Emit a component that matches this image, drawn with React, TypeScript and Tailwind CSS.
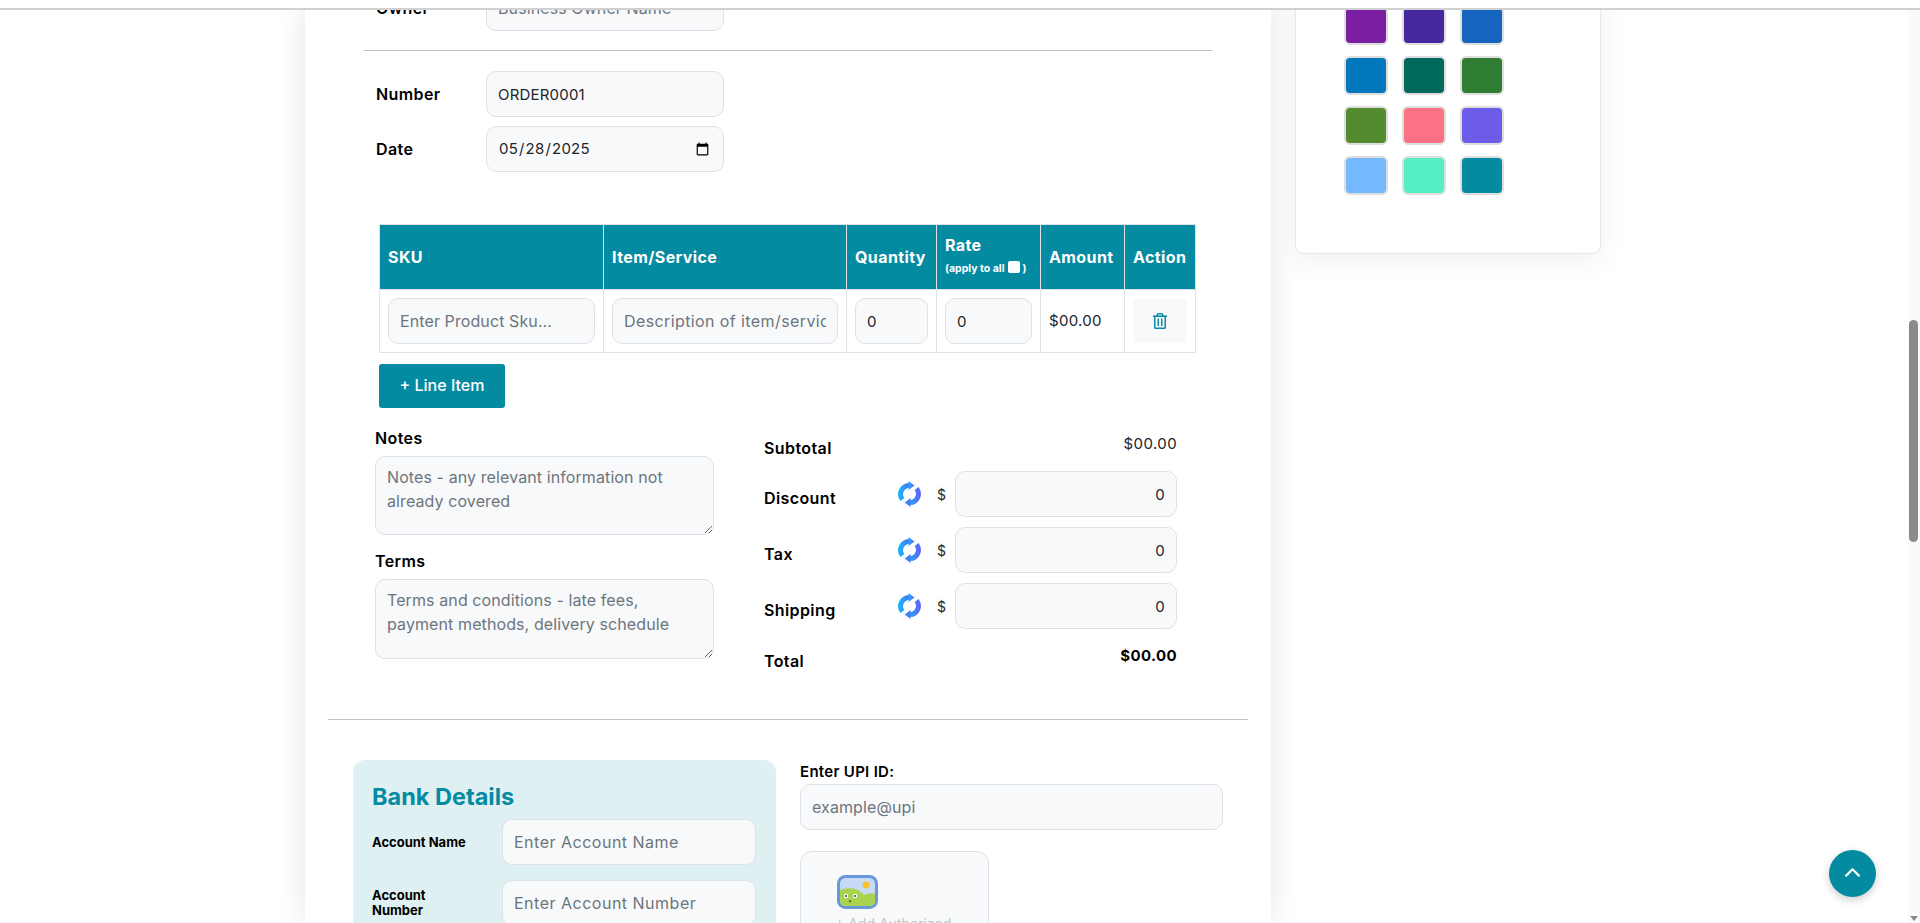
import { FaRegTrashAlt } from "react-icons/fa";
import { FaChevronUp } from "react-icons/fa6";

const inputClass =
  "h-[46px] rounded-[10px] border border-[#dee2e6] bg-[#f8f9fa] px-[11px] text-[15px] tracking-[0.2px] text-[#212529] outline-none placeholder:text-[16px] placeholder:text-[#6c757d] placeholder:tracking-[0.1px]";
const labelClass = "text-[16px] font-semibold tracking-[0.4px] text-black";

const swatches = [
  "bg-[#7b1fa2]",
  "bg-[#4527a0]",
  "bg-[#1565c0]",
  "bg-[#0277bd]",
  "bg-[#00695c]",
  "bg-[#2e7d32]",
  "bg-[#558b2f]",
  "bg-[#fb7285]",
  "bg-[#6c5ce7]",
  "bg-[#74b9ff]",
  "bg-[#55efc4]",
  "bg-[#058ba1]",
];

function SwapIcon() {
  return (
    <svg width="25" height="26" viewBox="0 0 25 26" fill="none" className="shrink-0">
      <defs>
        <linearGradient id="swap" x1="0" y1="0" x2="1" y2="0">
          <stop offset="0" stopColor="#1cb0f6" />
          <stop offset="1" stopColor="#5a67f8" />
        </linearGradient>
      </defs>
      <path d="M5.4 18.4A8.7 8.7 0 0 1 12 4.4" stroke="url(#swap)" strokeWidth="5" />
      <path d="M19.6 7.6A8.7 8.7 0 0 1 13 21.6" stroke="url(#swap)" strokeWidth="5" />
      <path d="M11.5 0 17.5 4.4 11.5 9Z" fill="url(#swap)" />
      <path d="M13.5 17 7.5 21.6 13.5 26Z" fill="url(#swap)" />
    </svg>
  );
}

function PictureIcon() {
  return (
    <svg width="41" height="34" viewBox="0 0 41 34">
      <rect x="1.5" y="1.5" width="38" height="31" rx="7" fill="#c6daf6" stroke="#6a97d9" strokeWidth="3" />
      <path d="M3 23V15C10 12 21 12 27 20C31 18 35 18 38 19V26C38 29 36 31 33 31H8C5 31 3 29 3 23Z" fill="#a8d34f" />
      <circle cx="29" cy="10" r="3.4" fill="#fbc02d" />
      <circle cx="9" cy="21" r="2.2" fill="#fff" />
      <circle cx="18" cy="21" r="2.2" fill="#fff" />
      <circle cx="9" cy="21" r="1" fill="#333" />
      <circle cx="18" cy="21" r="1" fill="#333" />
      <path d="M11.5 25.5h3l-1.5 2Z" fill="#4a3a2a" />
    </svg>
  );
}

function ChargeRow({ label }: { label: string }) {
  return (
    <div className="flex items-center">
      <span className={`mt-[8px] w-[133px] ${labelClass}`}>{label}</span>
      <SwapIcon />
      <span className="ml-[15px] w-[18px] text-[14px] text-[#212529]">$</span>
      <input className={`${inputClass} w-[222px] text-right`} defaultValue="0" />
    </div>
  );
}

export default function App() {
  return (
    <div className="relative h-[923px] w-[1920px] overflow-hidden bg-white font-['Inter','Liberation_Sans',sans-serif]">
      {/* sticky header edge */}
      <div className="absolute inset-x-0 top-0 z-10 h-[10px] border-b-2 border-[#d0d0d0] bg-white" />

      <div className="flex h-full">
        <div className="flex flex-1 items-start gap-[24px] pl-[305px]">
          {/* main form card */}
          <div className="h-full w-[966px] bg-white shadow-[0_0_30px_rgba(0,0,0,0.1)]">
            <div className="mx-[59px] border-b border-[#c0c0c0] pb-[19px]">
              <div className="-mt-[15px] flex items-center pl-[12px]">
                <label className={`w-[110px] ${labelClass}`}>Owner</label>
                <input className={`${inputClass} w-[238px]`} placeholder="Business Owner Name" />
              </div>
            </div>

            <div className="mx-[59px] mt-[20px] flex flex-col gap-[9px] pl-[12px]">
              <div className="flex items-center">
                <label className={`w-[110px] ${labelClass}`}>Number</label>
                <input className={`${inputClass} w-[238px]`} defaultValue="ORDER0001" />
              </div>
              <div className="flex items-center">
                <label className={`w-[110px] ${labelClass}`}>Date</label>
                <input type="date" className={`${inputClass} w-[238px]`} defaultValue="2025-05-28" />
              </div>
            </div>

            {/* line items */}
            <div className="ml-[74px] mt-[52px] w-[816px]">
              <table className="w-full table-fixed border-collapse">
                <colgroup>
                  <col className="w-[224px]" />
                  <col className="w-[243px]" />
                  <col className="w-[90px]" />
                  <col className="w-[104px]" />
                  <col className="w-[84px]" />
                  <col className="w-[71px]" />
                </colgroup>
                <thead>
                  <tr className="h-[65px] bg-[#058ba1] text-left text-[16px] font-bold tracking-[0.4px] text-white">
                    <th className="border border-[#dee2e6] px-[8px]">SKU</th>
                    <th className="border border-[#dee2e6] px-[8px]">Item/Service</th>
                    <th className="border border-[#dee2e6] px-[8px]">Quantity</th>
                    <th className="border border-[#dee2e6] px-[8px] leading-[24px]">
                      <div className="-mt-[1px]">Rate</div>
                      <div className="flex items-center gap-[3px] whitespace-nowrap text-[10.5px] leading-[24px] tracking-normal">
                        (apply to all
                        <input type="checkbox" className="-mt-[3px] size-[12px] appearance-none rounded-[2px] bg-white" />
                        <span>)</span>
                      </div>
                    </th>
                    <th className="border border-[#dee2e6] px-[8px]">Amount</th>
                    <th className="border border-[#dee2e6] px-[8px]">Action</th>
                  </tr>
                </thead>
                <tbody>
                  <tr className="h-[63px] text-[15px] text-[#212529]">
                    <td className="border border-[#dee2e6] px-[8px]">
                      <input className={`${inputClass} w-full`} placeholder="Enter Product Sku..." />
                    </td>
                    <td className="border border-[#dee2e6] px-[8px]">
                      <input className={`${inputClass} w-full placeholder:tracking-[0.4px]`} placeholder="Description of item/service" />
                    </td>
                    <td className="border border-[#dee2e6] px-[8px]">
                      <input className={`${inputClass} w-full`} defaultValue="0" />
                    </td>
                    <td className="border border-[#dee2e6] px-[8px]">
                      <input className={`${inputClass} w-full`} defaultValue="0" />
                    </td>
                    <td className="border border-[#dee2e6] px-[8px] tracking-[0.3px]">$00.00</td>
                    <td className="border border-[#dee2e6] px-[8px]">
                      <button className="flex h-[44px] w-[54px] items-center justify-center rounded-[4px] bg-[#f8f9fa] text-[#058ba1]">
                        <FaRegTrashAlt className="size-[16px]" />
                      </button>
                    </td>
                  </tr>
                </tbody>
              </table>
              <button className="mt-[11px] h-[44px] w-[126px] rounded-[3px] bg-[#058ba1] pb-[2px] text-[16px] font-medium text-white">
                + Line Item
              </button>
            </div>

            {/* notes and totals */}
            <div className="ml-[70px] mt-[19px] flex items-start">
              <div className="w-[339px]">
                <label className={`block leading-[22px] ${labelClass}`}>Notes</label>
                <textarea
                  className={`${inputClass} mt-[7px] block h-[79px] w-full py-[8px] leading-[24px]`}
                  placeholder="Notes - any relevant information not already covered"
                />
                <label className={`mt-[15px] block leading-[22px] ${labelClass}`}>Terms</label>
                <textarea
                  className={`${inputClass} mt-[7px] block h-[80px] w-full py-[8px] leading-[24px]`}
                  placeholder="Terms and conditions - late fees, payment methods, delivery schedule"
                />
              </div>

              <div className="ml-[50px] mt-[6px] w-[413px]">
                <div className="flex h-[38px] items-start justify-between">
                  <span className={`mt-[3px] ${labelClass}`}>Subtotal</span>
                  <span className="text-[15px] tracking-[0.4px] text-[#212529]">$00.00</span>
                </div>
                <div className="flex flex-col gap-[10px]">
                  <ChargeRow label="Discount" />
                  <ChargeRow label="Tax" />
                  <ChargeRow label="Shipping" />
                </div>
                <div className="mt-[16px] flex items-start justify-between">
                  <span className={`mt-[4px] ${labelClass}`}>Total</span>
                  <span className="text-[15px] font-bold tracking-[0.4px] text-black">$00.00</span>
                </div>
              </div>
            </div>

            <div className="mx-[23px] mt-[46px] border-t border-[#c0c0c0]" />

            {/* bank details and signature */}
            <div className="ml-[48px] mt-[40px] flex items-start gap-[24px]">
              <div className="h-[300px] w-[423px] rounded-[12px] bg-[#dff0f3] px-[19px] pt-[24px]">
                <h2 className="text-[23.5px] font-bold leading-[26px] text-[#058ba1]">Bank Details</h2>
                <div className="mt-[9px] flex items-center">
                  <label className="w-[130px] text-[13px] font-bold leading-[15px] text-black">Account Name</label>
                  <input className={`${inputClass} w-[254px] placeholder:tracking-[0.5px]`} placeholder="Enter Account Name" />
                </div>
                <div className="mt-[15px] flex items-center">
                  <label className="w-[130px] text-[13px] font-bold leading-[15px] text-black">
                    Account
                    <br />
                    Number
                  </label>
                  <input className={`${inputClass} w-[254px] placeholder:tracking-[0.5px]`} placeholder="Enter Account Number" />
                </div>
              </div>

              <div className="w-[423px]">
                <label className="block text-[15px] font-semibold leading-[24px] tracking-[0.3px] text-black">Enter UPI ID:</label>
                <input className={`${inputClass} w-full`} placeholder="example@upi" />
                <div className="mt-[21px] h-[160px] w-[189px] rounded-[12px] border border-[#dee2e6] bg-[#f8f9fa] pl-[36px] pt-[23px]">
                  <PictureIcon />
                  <p className="-ml-[2px] mt-[5px] text-[14px] leading-[20px] text-[#c4c4c4]">+ Add Authorized</p>
                </div>
              </div>
            </div>
          </div>

          {/* theme colours card */}
          <div className="-mt-[20px] h-[274px] w-[306px] rounded-[8px] border border-[#e6e6f0] bg-white pl-[48px] pt-[25px] shadow-[0_8px_30px_rgba(0,0,0,0.06)]">
            <div className="grid w-[160px] grid-cols-3 gap-x-[14px] gap-y-[11px]">
              {swatches.map((c) => (
                <div key={c} className={`h-[39px] w-[44px] rounded-[6px] border-2 border-[#dedede] ${c}`} />
              ))}
            </div>
          </div>
        </div>

        {/* scrollbar */}
        <div className="relative w-[12px] bg-[#fafafa]">
          <div className="absolute left-[1px] right-[2px] top-[320px] h-[222px] rounded-full bg-[#8a8a8a]" />
          <svg className="absolute bottom-[2px] left-[2px]" width="8" height="5" viewBox="0 0 8 5">
            <path d="M0 0h8L4 5Z" fill="#8a8a8a" />
          </svg>
        </div>
      </div>

      {/* back to top */}
      <button className="absolute left-[1829px] top-[850px] flex size-[47px] items-center justify-center rounded-full bg-[#058ba1] text-white shadow-[0_3px_8px_rgba(0,0,0,0.2)]">
        <FaChevronUp className="size-[17px]" />
      </button>
    </div>
  );
}
